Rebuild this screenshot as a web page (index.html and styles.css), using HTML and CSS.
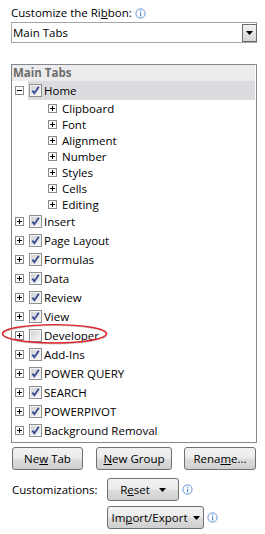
FILE: index.html
```html
<!DOCTYPE html>
<html>
<head>
<meta charset="utf-8">
<link rel="stylesheet" href="styles.css">
</head>
<body>
<svg class="defs" width="0" height="0" aria-hidden="true">
  <defs>
    <linearGradient id="cbg" x1="0" y1="0" x2="1" y2="1">
      <stop offset="0" stop-color="#cfd0d2"/>
      <stop offset="1" stop-color="#f7f7f7"/>
    </linearGradient>
    <symbol id="cb-on" viewBox="0 0 13 13">
      <rect x="0.5" y="0.5" width="12" height="12" fill="#f6f6f6" stroke="#8e8f8f"/>
      <rect x="2" y="2" width="9" height="9" fill="url(#cbg)"/>
      <path d="M3.3 6.6 L5.4 9.2 L9.8 2.8" fill="none" stroke="#3b4d93" stroke-width="1.9"/>
    </symbol>
    <symbol id="cb-off" viewBox="0 0 13 13">
      <rect x="0.5" y="0.5" width="12" height="12" fill="#f6f6f6" stroke="#8e8f8f"/>
      <rect x="2" y="2" width="9" height="9" fill="url(#cbg)"/>
    </symbol>
    <symbol id="plus" viewBox="0 0 9 9">
      <rect x="0.5" y="0.5" width="8" height="8" fill="#fff" stroke="#8a8a8a"/>
      <path d="M2 4.5 H7 M4.5 2 V7" stroke="#000" stroke-width="1"/>
    </symbol>
    <symbol id="minus" viewBox="0 0 9 9">
      <rect x="0.5" y="0.5" width="8" height="8" fill="#fff" stroke="#8a8a8a"/>
      <path d="M2 4.5 H7" stroke="#000" stroke-width="1"/>
    </symbol>
    <symbol id="info" viewBox="0 0 11 11">
      <circle cx="5.5" cy="5.5" r="4.6" fill="#fff" stroke="#5b8fd6" stroke-width="1"/>
      <rect x="5" y="2.6" width="1.1" height="1.1" fill="#4a7fcc"/>
      <rect x="5" y="4.6" width="1.1" height="3.8" fill="#4a7fcc"/>
    </symbol>
    <symbol id="tri" viewBox="0 0 7 4">
      <path d="M0 0 H7 L3.5 4 Z" fill="#000"/>
    </symbol>
  </defs>
</svg>

<div class="page">
  <div class="label"><span>Customize the Ri<u>b</u>bon:</span><svg class="info"><use href="#info"/></svg></div>

  <div class="select">
    <span class="select-text">Main Tabs</span>
    <span class="select-btn"><svg class="tri"><use href="#tri"/></svg></span>
  </div>

  <div class="tree">
    <div class="tree-head">Main Tabs</div>

    <div class="row top sel">
      <svg class="exp"><use href="#minus"/></svg>
      <div class="item"><svg class="cb"><use href="#cb-on"/></svg><span>Home</span></div>
    </div>
    <div class="row child"><svg class="exp"><use href="#plus"/></svg><span>Clipboard</span></div>
    <div class="row child"><svg class="exp"><use href="#plus"/></svg><span>Font</span></div>
    <div class="row child"><svg class="exp"><use href="#plus"/></svg><span>Alignment</span></div>
    <div class="row child"><svg class="exp"><use href="#plus"/></svg><span>Number</span></div>
    <div class="row child"><svg class="exp"><use href="#plus"/></svg><span>Styles</span></div>
    <div class="row child"><svg class="exp"><use href="#plus"/></svg><span>Cells</span></div>
    <div class="row child"><svg class="exp"><use href="#plus"/></svg><span>Editing</span></div>

    <div class="row top"><svg class="exp"><use href="#plus"/></svg><div class="item"><svg class="cb"><use href="#cb-on"/></svg><span>Insert</span></div></div>
    <div class="row top"><svg class="exp"><use href="#plus"/></svg><div class="item"><svg class="cb"><use href="#cb-on"/></svg><span>Page Layout</span></div></div>
    <div class="row top"><svg class="exp"><use href="#plus"/></svg><div class="item"><svg class="cb"><use href="#cb-on"/></svg><span>Formulas</span></div></div>
    <div class="row top"><svg class="exp"><use href="#plus"/></svg><div class="item"><svg class="cb"><use href="#cb-on"/></svg><span>Data</span></div></div>
    <div class="row top"><svg class="exp"><use href="#plus"/></svg><div class="item"><svg class="cb"><use href="#cb-on"/></svg><span>Review</span></div></div>
    <div class="row top"><svg class="exp"><use href="#plus"/></svg><div class="item"><svg class="cb"><use href="#cb-on"/></svg><span>View</span></div></div>
    <div class="row top"><svg class="exp"><use href="#plus"/></svg><div class="item"><svg class="cb"><use href="#cb-off"/></svg><span>Developer</span></div></div>
    <div class="row top"><svg class="exp"><use href="#plus"/></svg><div class="item"><svg class="cb"><use href="#cb-on"/></svg><span>Add-Ins</span></div></div>
    <div class="row top"><svg class="exp"><use href="#plus"/></svg><div class="item"><svg class="cb"><use href="#cb-on"/></svg><span>POWER QUERY</span></div></div>
    <div class="row top"><svg class="exp"><use href="#plus"/></svg><div class="item"><svg class="cb"><use href="#cb-on"/></svg><span>SEARCH</span></div></div>
    <div class="row top"><svg class="exp"><use href="#plus"/></svg><div class="item"><svg class="cb"><use href="#cb-on"/></svg><span>POWERPIVOT</span></div></div>
    <div class="row top"><svg class="exp"><use href="#plus"/></svg><div class="item"><svg class="cb"><use href="#cb-on"/></svg><span>Background Removal</span></div></div>
  </div>

  <div class="btn-row">
    <button class="btn w-newtab"><span>Ne<u>w</u> Tab</span></button>
    <button class="btn w-newgroup"><span><u>N</u>ew Group</span></button>
    <button class="btn w-rename"><span>Rena<u>m</u>e...</span></button>
  </div>

  <div class="cust-row">
    <span class="cust-label">Customizations:</span>
    <button class="btn w-reset"><span>R<u>e</u>set</span><svg class="tri gap-reset"><use href="#tri"/></svg></button>
    <svg class="info"><use href="#info"/></svg>
  </div>

  <div class="cust-row second">
    <button class="btn w-import"><span>Im<u>p</u>ort/Export</span><svg class="tri gap-import"><use href="#tri"/></svg></button>
    <svg class="info"><use href="#info"/></svg>
  </div>

  <svg class="callout" viewBox="0 0 108 22">
    <ellipse cx="54" cy="11.6" rx="52" ry="9.2" fill="none" stroke="#c9c9c9" stroke-width="1.2"/>
    <ellipse cx="53.5" cy="10.8" rx="52" ry="9.2" fill="none" stroke="#e0232b" stroke-width="1.4"/>
  </svg>
</div>
</body>
</html>
```

FILE: styles.css
```css
body {
  margin: 0;
  background: #fff;
  font-family: "Segoe UI", "Open Sans", "Noto Sans", sans-serif;
  font-size: 11.5px;
  color: #000;
}

.defs {
  position: absolute;
  width: 0;
  height: 0;
  overflow: hidden;
}

.page {
  position: relative;
  width: 265px;
  height: 534px;
  box-sizing: border-box;
  padding: 4px 8px 0 11px;
}

.label {
  display: flex;
  align-items: center;
  height: 18px;
  line-height: 18px;
}

.info {
  width: 11px;
  height: 11px;
  margin-left: 3px;
  flex: none;
}

.select {
  display: flex;
  align-items: center;
  height: 21px;
  box-sizing: border-box;
  border: 1px solid #a5a5a5;
  padding: 1px 0 0 1px;
}

.select-text {
  flex: 1;
  line-height: 18px;
}

.select-btn {
  width: 15px;
  height: 18px;
  box-sizing: border-box;
  border: 1px solid #6c6c6c;
  background: linear-gradient(#f3f3f3, #e4e4e4 50%, #d6d6d6);
  display: flex;
  align-items: center;
  justify-content: center;
  margin-right: -1px;
}

.tri {
  width: 7px;
  height: 4px;
  flex: none;
}

.tree {
  margin-top: 21px;
  height: 379px;
  box-sizing: border-box;
  border: 1px solid #828790;
}

.tree-head {
  height: 16px;
  line-height: 16px;
  background: #ececec;
  color: #6d6d6d;
  font-weight: bold;
  padding-left: 1px;
  margin-right: 1px;
}

.row {
  display: flex;
  align-items: center;
}

.row.top {
  height: 19px;
  padding-left: 3px;
  margin-right: 1px;
}

.row.child {
  height: 16px;
  padding-left: 36px;
  gap: 5px;
}

.exp {
  width: 9px;
  height: 9px;
  flex: none;
}

.item {
  flex: 1;
  height: 100%;
  display: flex;
  align-items: center;
  gap: 2px;
  margin-left: 4px;
  padding-left: 1px;
}

.row.sel .item {
  background: #dcdce0;
}

.cb {
  width: 13px;
  height: 13px;
  flex: none;
}

.btn {
  height: 23px;
  box-sizing: border-box;
  border: 1px solid #707070;
  border-radius: 3px;
  background: linear-gradient(#f2f2f2, #ebebeb 48%, #dddddd 52%, #cfcfcf);
  font: inherit;
  color: #000;
  padding: 0;
  display: inline-flex;
  align-items: center;
  justify-content: center;
  flex: none;
}

.btn-row {
  display: flex;
  margin-top: 4px;
  padding-left: 1px;
  gap: 13px;
}

.w-newtab { width: 71px; }
.w-newgroup { width: 76px; margin-right: -1px; }
.w-rename { width: 72px; }
.w-reset { width: 72px; }
.w-import { width: 97px; }

.gap-reset { margin-left: 9px; }
.gap-import { margin-left: 5px; }

.cust-row {
  display: flex;
  align-items: center;
  margin-top: 8px;
  padding-left: 1px;
}

.cust-row.second {
  margin-top: 5px;
  padding-left: 96px;
}

.cust-label {
  width: 95px;
}

.callout {
  position: absolute;
  left: 1px;
  top: 323px;
  width: 108px;
  height: 22px;
}
```
